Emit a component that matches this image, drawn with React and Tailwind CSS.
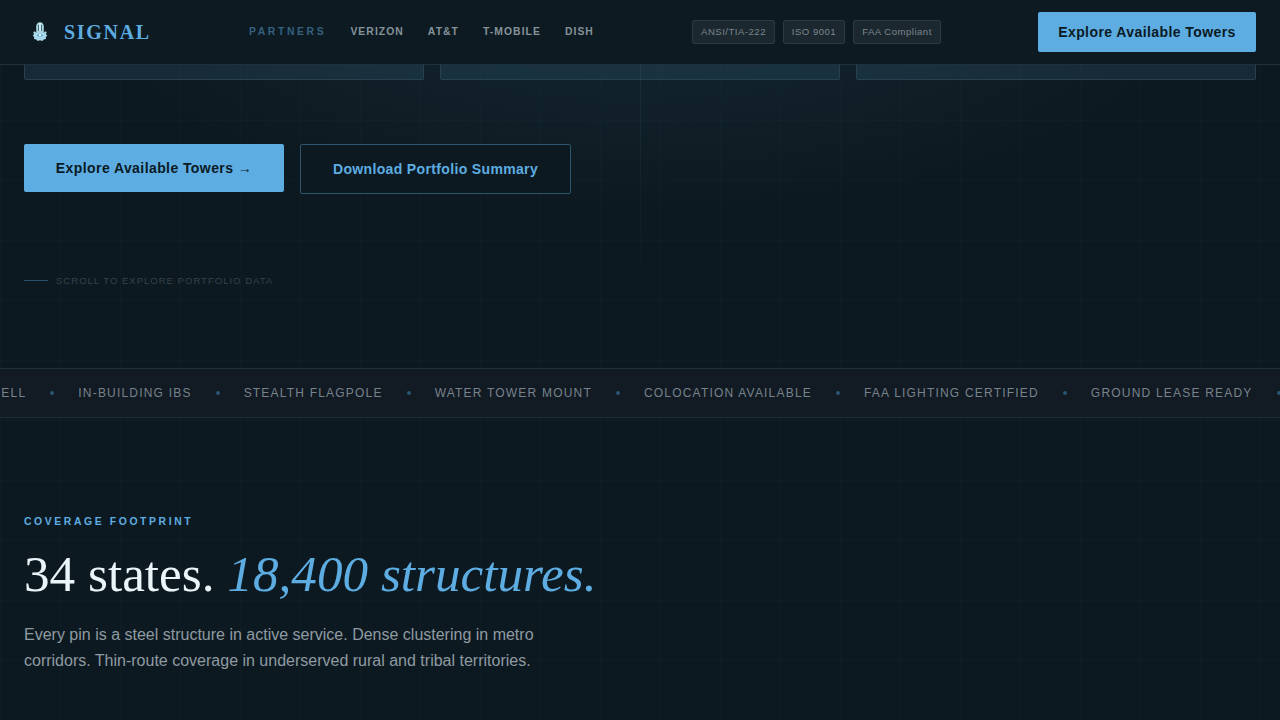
const partners = ['VERIZON', 'AT&T', 'T-MOBILE', 'DISH'];
const badges = [
  ['ANSI/TIA-222', 'w-[83px]'],
  ['ISO 9001', 'w-[62px]'],
  ['FAA Compliant', 'w-[88px]'],
];
const ticker = [
  'SMALL CELL',
  'IN-BUILDING IBS',
  'STEALTH FLAGPOLE',
  'WATER TOWER MOUNT',
  'COLOCATION AVAILABLE',
  'FAA LIGHTING CERTIFIED',
  'GROUND LEASE READY',
];

function Logo() {
  return (
    <svg width="32" height="32" viewBox="0 0 32 32" fill="none">
      <path d="M12.2 17V10.500C12.200 8 13.600 6.200 16 6.200S19.800 8 19.800 10.500V17z" fill="#a9d2e0" />
      <path d="M14.500 8.800V15M17.500 8.800V15" stroke="#3a6174" strokeWidth=".9" />
      <path d="M16 7v8" stroke="#e4f6fb" strokeWidth="1.300" />
      <path d="M12 16.800c-.6-1.800-2.600-1.700-2.600-.3 0 .8.600 1 .6 1.500l-1.200 1.800 1.400 1.200-.2 2 2.300.4 1.300 1.500 2.400-.7 2.400.7 1.300-1.500 2.300-.4-.2-2 1.400-1.200-1.200-1.800c0-.5.600-.7.600-1.500 0-1.400-2-1.500-2.600.3z" fill="#a9d8ea" />
      <path d="M12.500 19.300q3.500-3.300 7 0q-3.500 3-7 0z" fill="#62abd0" />
      <circle cx="16" cy="19.200" r="1.100" fill="#edfbff" />
    </svg>
  );
}

export default function App() {
  return (
    <div className="relative flex h-[720px] w-[1280px] flex-col overflow-hidden bg-[#0d1920] font-['Liberation_Sans',Arial,sans-serif] text-[#e8f4fa]">
      <div className="pointer-events-none absolute inset-0 bg-[radial-gradient(ellipse_560px_210px_at_640px_0px,rgba(93,173,226,0.09),transparent)]" />
      <div className="pointer-events-none absolute inset-0 bg-[linear-gradient(rgba(93,173,226,0.025)_1px,transparent_1px),linear-gradient(90deg,rgba(93,173,226,0.025)_1px,transparent_1px)] bg-[size:60px_60px]" />

      <header className="relative flex h-[65px] shrink-0 items-center border-b border-[#1f323b] bg-[#0e1a21] px-6">
        <div className="flex w-[225px] items-center gap-2">
          <Logo />
          <span className="font-['Liberation_Serif',serif] text-[20px] font-bold tracking-[1.7px] text-[#5dade2]">SIGNAL</span>
        </div>
        <nav className="flex w-[443px] items-center gap-6 text-[10.4px] font-bold leading-4">
          <span className="w-[77.400px] whitespace-nowrap tracking-[2.6px] text-[#33617f]">PARTNERS</span>
          {partners.map((p) => (
            <span key={p} className="whitespace-nowrap tracking-[1.04px] text-[#84929a]">{p}</span>
          ))}
        </nav>
        <div className="flex gap-2">
          {badges.map(([label, width]) => (
            <span key={label} className={`${width} flex h-6 items-center justify-center whitespace-nowrap rounded-[2px] border border-[#2b3a42] bg-[#1b2830] text-[9.6px] tracking-[0.48px] text-[#7b868c]`}>{label}</span>
          ))}
        </div>
        <button className="ml-auto h-10 w-[218px] whitespace-nowrap rounded-[2px] bg-[#5dade2] text-[14px] font-bold tracking-[0.42px] text-[#0a1a24]">Explore Available Towers</button>
      </header>

      <section className="relative h-[303px] shrink-0 px-6">
        <div className="grid grid-cols-3 gap-4">
          {[0, 1, 2].map((i) => (
            <div key={i} className="h-[15px] rounded-b-[2px] border border-t-0 border-[#28414e] bg-[#5dade2]/12" />
          ))}
        </div>
        <div className="mt-16 flex items-start gap-4">
          <button className="h-12 w-[260px] whitespace-nowrap rounded-[2px] bg-[#5dade2] text-[14px] font-bold tracking-[0.42px] text-[#0a1a24]">Explore Available Towers →</button>
          <button className="h-[50px] w-[271px] whitespace-nowrap rounded-[2px] border border-[#2f556d] bg-[#0d1920] text-[14px] font-bold tracking-[0.35px] text-[#5dade2]">Download Portfolio Summary</button>
        </div>
        <div className="mt-[79px] flex items-center gap-2">
          <span className="mb-px h-px w-6 bg-[#2c5068]" />
          <span className="text-[9.6px] leading-4 tracking-[0.96px] text-[#34434b]">SCROLL TO EXPLORE PORTFOLIO DATA</span>
        </div>
        <div className="pointer-events-none absolute left-[640px] top-0 h-60 w-px bg-linear-to-b from-[#5dade2]/10 to-transparent" />
      </section>

      <div className="relative flex h-[50px] shrink-0 items-center justify-end overflow-hidden border-y border-[#1e2f38] bg-[#121a24]">
        <div className="-mr-[24.5px] flex shrink-0 items-center">
          {ticker.map((item) => (
            <div key={item} className="flex items-center">
              <span className="whitespace-nowrap text-[12px] tracking-[1.2px] text-[#77838b]">{item}</span>
              <span className="mx-6 size-1 rounded-full bg-[#2b5672]" />
            </div>
          ))}
        </div>
      </div>

      <section className="relative px-6 pt-[96px]">
        <p className="text-[10.4px] font-bold leading-4 tracking-[2.6px] text-[#5dade2]">COVERAGE FOOTPRINT</p>
        <h2 className="mt-4 whitespace-nowrap font-['Liberation_Serif',serif] text-[51.2px] leading-[56px] text-[#eaf5fa]">
          34 states. <em className="text-[#5dade2]">18,400 structures.</em>
        </h2>
        <p className="mt-5 w-[560px] text-[16px] leading-[26px] text-[#8f9ba2]">
          Every pin is a steel structure in active service. Dense clustering in metro corridors. Thin-route coverage in underserved rural and tribal territories.
        </p>
      </section>
    </div>
  );
}
